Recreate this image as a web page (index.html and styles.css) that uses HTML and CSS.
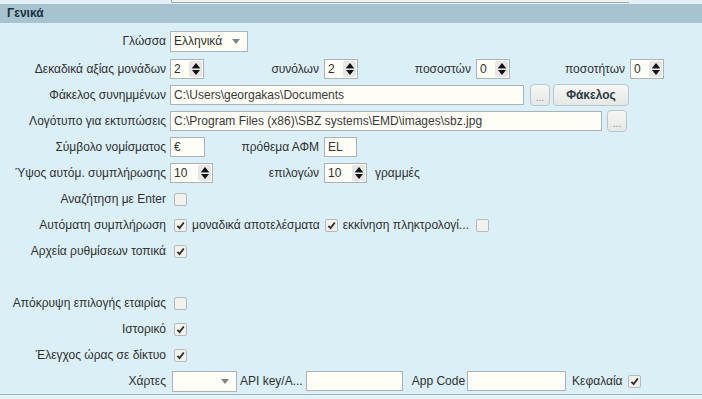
FILE: index.html
```html
<!DOCTYPE html>
<html lang="el">
<head>
    <meta charset="UTF-8">
    <title>Ρυθμίσεις - Γενικά</title>
    <link rel="stylesheet" href="styles.css">
</head>
<body>
    <div class="top-strip"><div class="prev-box"></div></div>

    <div class="panel">
        <div class="panel-title">Γενικά</div>

        <div class="form">
            <div class="row row-first">
                <span class="lbl">Γλώσσα</span>
                <div class="ctl">
                    <div class="select select-lang"><span>Ελληνικά</span><span class="caret"></span></div>
                </div>
            </div>

            <div class="row">
                <span class="lbl">Δεκαδικά αξίας μονάδων</span>
                <div class="ctl">
                    <div class="spin"><span class="spin-val">2</span><span class="spin-btn"><i class="up"></i><i class="down"></i></span></div>
                    <span class="sub w120">συνόλων</span>
                    <div class="spin"><span class="spin-val">2</span><span class="spin-btn"><i class="up"></i><i class="down"></i></span></div>
                    <span class="sub w118">ποσοστών</span>
                    <div class="spin"><span class="spin-val">0</span><span class="spin-btn"><i class="up"></i><i class="down"></i></span></div>
                    <span class="sub w120">ποσοτήτων</span>
                    <div class="spin"><span class="spin-val">0</span><span class="spin-btn"><i class="up"></i><i class="down"></i></span></div>
                </div>
            </div>

            <div class="row">
                <span class="lbl">Φάκελος συνημμένων</span>
                <div class="ctl">
                    <div class="input input-path">C:\Users\georgakas\Documents</div>
                    <button class="btn btn-dots btn-gap6">...</button>
                    <button class="btn btn-folder">Φάκελος</button>
                </div>
            </div>

            <div class="row">
                <span class="lbl">Λογότυπο για εκτυπώσεις</span>
                <div class="ctl">
                    <div class="input input-logo">C:\Program Files (x86)\SBZ systems\EMD\images\sbz.jpg</div>
                    <button class="btn btn-dots btn-gap5">...</button>
                </div>
            </div>

            <div class="row">
                <span class="lbl">Σύμβολο νομίσματος</span>
                <div class="ctl">
                    <div class="input input-short">€</div>
                    <span class="sub w119">πρόθεμα ΑΦΜ</span>
                    <div class="input input-vat">EL</div>
                </div>
            </div>

            <div class="row">
                <span class="lbl">Ύψος αυτόμ. συμπλήρωσης</span>
                <div class="ctl">
                    <div class="spin spin-wide"><span class="spin-val">10</span><span class="spin-btn"><i class="up"></i><i class="down"></i></span></div>
                    <span class="sub w111">επιλογών</span>
                    <div class="spin spin-wide"><span class="spin-val">10</span><span class="spin-btn"><i class="up"></i><i class="down"></i></span></div>
                    <span class="after">γραμμές</span>
                </div>
            </div>

            <div class="row">
                <span class="lbl">Αναζήτηση με Enter</span>
                <div class="ctl">
                    <span class="chk"></span>
                </div>
            </div>

            <div class="row">
                <span class="lbl">Αυτόματη συμπλήρωση</span>
                <div class="ctl inline-group">
                    <span class="chk on"><svg viewBox="0 0 12 12"><path d="M2.6 6.4 L5 8.8 L9.6 2.8"/></svg></span>
                    <span>μοναδικά αποτελέσματα</span>
                    <span class="chk on"><svg viewBox="0 0 12 12"><path d="M2.6 6.4 L5 8.8 L9.6 2.8"/></svg></span>
                    <span>εκκίνηση πληκτρολογί...</span>
                    <span class="chk chk-last"></span>
                </div>
            </div>

            <div class="row">
                <span class="lbl">Αρχεία ρυθμίσεων τοπικά</span>
                <div class="ctl">
                    <span class="chk on"><svg viewBox="0 0 12 12"><path d="M2.6 6.4 L5 8.8 L9.6 2.8"/></svg></span>
                </div>
            </div>

            <div class="row row-empty"></div>

            <div class="row">
                <span class="lbl">Απόκρυψη επιλογής εταιρίας</span>
                <div class="ctl">
                    <span class="chk"></span>
                </div>
            </div>

            <div class="row">
                <span class="lbl">Ιστορικό</span>
                <div class="ctl">
                    <span class="chk on"><svg viewBox="0 0 12 12"><path d="M2.6 6.4 L5 8.8 L9.6 2.8"/></svg></span>
                </div>
            </div>

            <div class="row">
                <span class="lbl">Έλεγχος ώρας σε δίκτυο</span>
                <div class="ctl">
                    <span class="chk on"><svg viewBox="0 0 12 12"><path d="M2.6 6.4 L5 8.8 L9.6 2.8"/></svg></span>
                </div>
            </div>

            <div class="row">
                <span class="lbl">Χάρτες</span>
                <div class="ctl maps">
                    <div class="select select-maps"><span></span><span class="caret"></span></div>
                    <span class="api-key">API key/A...</span>
                    <div class="input input-api"></div>
                    <span class="app-code">App Code</span>
                    <div class="input input-app"></div>
                    <span class="caps">Κεφαλαία</span>
                    <span class="chk on"><svg viewBox="0 0 12 12"><path d="M2.6 6.4 L5 8.8 L9.6 2.8"/></svg></span>
                </div>
            </div>
        </div>
    </div>
</body>
</html>
```

FILE: styles.css
```css
body {
    margin: 0;
    width: 702px;
    height: 399px;
    overflow: hidden;
    font-family: "Liberation Sans", Arial, sans-serif;
    font-size: 12px;
    color: #303030;
    background-color: #e4f1f6; /* pale strip under the panel */
}
.top-strip {
    height: 4px;
    background-color: #e2eff5;
}
.prev-box {
    margin-left: 171px;
    width: 457px;
    height: 2px;
    border-left: 1px solid #9ea9ae;
    border-bottom: 1px solid #9ea9ae;
    background-color: #eef3f0;
}
.panel {
    background-color: #dbeff7; /* light blue */
    border-bottom: 1px solid #9db7c3;
}
.panel-title {
    height: 19px;
    line-height: 19px;
    padding-left: 7px;
    background-color: #a7c3cf;
    color: #18303b;
    font-weight: bold;
}
.form {
    padding-top: 5px;
}
.row {
    display: grid;
    grid-template-columns: 166px 1fr;
    column-gap: 4px;
    height: 26px;
    align-items: center;
}
.row-first {
    margin-bottom: 2px;
}
.lbl {
    text-align: right;
    white-space: nowrap;
}
.ctl {
    display: flex;
    align-items: center;
    white-space: nowrap;
}
.sub {
    text-align: right;
    padding-right: 5px;
    box-sizing: border-box;
}
.w111 { width: 111px; }
.w118 { width: 118px; }
.w119 { width: 119px; }
.w120 { width: 120px; }
.after {
    margin-left: 8px;
}

/* text boxes */
.input {
    box-sizing: border-box;
    height: 20px;
    line-height: 18px;
    padding: 0 3px;
    border: 1px solid #a9b4b9;
    background-color: #fffef6;
    color: #3a3a3a;
    overflow: hidden;
}
.input-path { width: 354px; }
.input-logo { width: 432px; }
.input-short { width: 35px; }
.input-vat { width: 33px; }
.input-api { width: 97px; }
.input-app { width: 99px; }

/* combo boxes */
.select {
    box-sizing: border-box;
    height: 21px;
    display: flex;
    align-items: center;
    justify-content: space-between;
    padding: 0 7px 0 3px;
    border: 1px solid #a9b4b9;
    background-color: #fffef6;
}
.select-lang { width: 78px; }
.select-maps { width: 65px; margin-left: 2px; }
.caret {
    width: 0;
    height: 0;
    border-left: 4px solid transparent;
    border-right: 4px solid transparent;
    border-top: 5px solid #7d8488;
}

/* number boxes */
.spin {
    box-sizing: border-box;
    width: 34px;
    height: 20px;
    display: flex;
    align-items: center;
    justify-content: space-between;
    padding: 0 1px 0 3px;
    border: 1px solid #a9b4b9;
    background-color: #fffef6;
}
.spin-wide { width: 43px; }
.spin-btn {
    width: 13px;
    height: 16px;
    display: flex;
    flex-direction: column;
    align-items: center;
    justify-content: center;
    gap: 2px;
    background-color: #e6e7e4;
    border-radius: 2px;
}
.spin-btn i {
    width: 0;
    height: 0;
    border-left: 4px solid transparent;
    border-right: 4px solid transparent;
}
.spin-btn .up {
    border-bottom: 5px solid #111;
}
.spin-btn .down {
    border-top: 5px solid #111;
    position: relative;
}
.spin-btn .down::before {
    content: "";
    position: absolute;
    left: -4px;
    top: -7px;
    width: 8px;
    height: 1px;
    background-color: #8a8f91;
}

/* buttons */
.btn {
    box-sizing: border-box;
    height: 22px;
    padding: 0;
    font-family: inherit;
    font-size: 12px;
    color: #2c3a40;
    border: 1px solid #b9c6cc;
    border-radius: 4px;
    background: linear-gradient(#f7f7f4, #e5e8e6);
}
.btn-dots {
    width: 20px;
    color: #7a8185;
    font-size: 10px;
    line-height: 26px;
}
.btn-gap6 { margin-left: 6px; }
.btn-gap5 { margin-left: 5px; }
.btn-folder {
    width: 76px;
    margin-left: 3px;
    font-weight: bold;
}

/* check boxes */
.chk {
    box-sizing: border-box;
    width: 13px;
    height: 13px;
    margin-left: 4px;
    border: 1px solid #b3babd;
    border-radius: 2px;
    background-color: #f3f2ea;
    display: inline-flex;
}
.chk svg {
    width: 11px;
    height: 11px;
}
.chk path {
    fill: none;
    stroke: #2b2f31;
    stroke-width: 2;
}
.inline-group > span + span {
    margin-left: 5px;
}
.inline-group > .chk-last {
    margin-left: 7px;
}
.maps .api-key { margin-left: 3px; }
.maps .input-api { margin-left: 3px; }
.maps .app-code { margin-left: 9px; }
.maps .input-app { margin-left: 2px; }
.maps .caps { margin-left: 6px; }
.maps .chk { margin-left: 5px; }
```
